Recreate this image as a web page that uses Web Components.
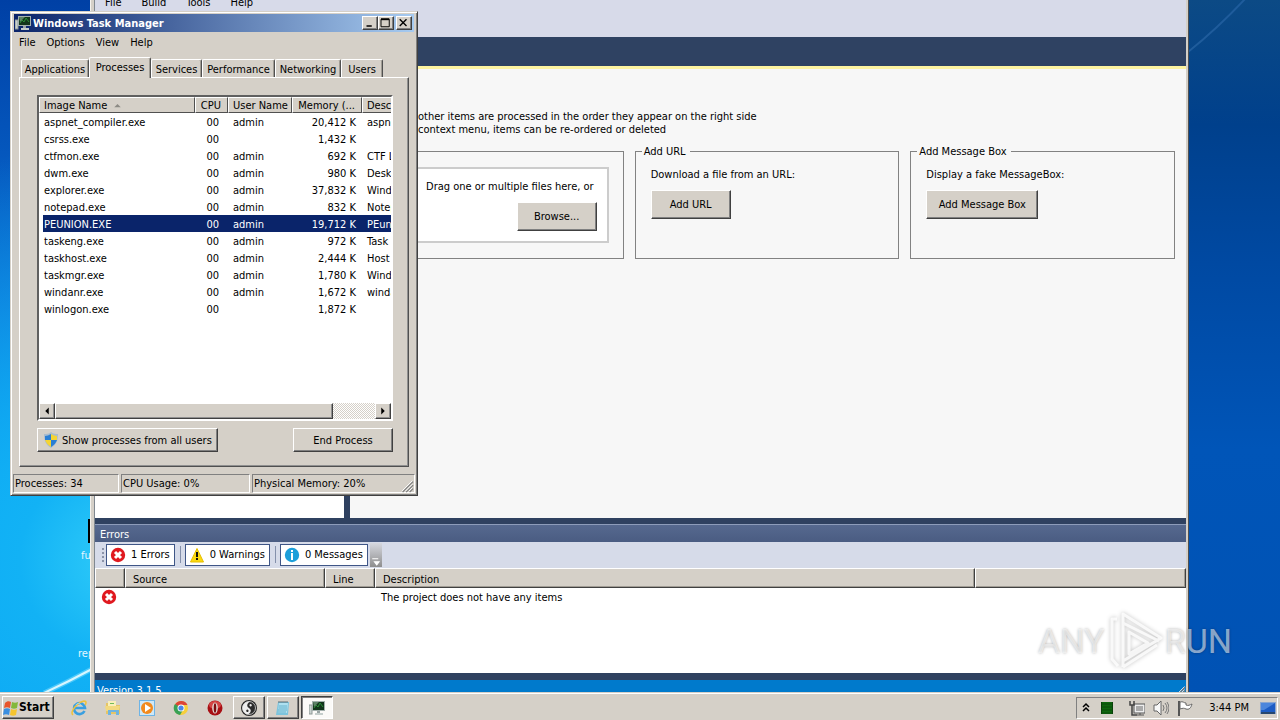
<!DOCTYPE html>
<html lang="en">
<head>
<meta charset="utf-8">
<title>Windows desktop</title>
<style>
html, body { margin: 0; height: 100%; }
body { font: 11px/13px "DejaVu Sans Condensed", "DejaVu Sans", sans-serif; color: #000; }
</style>
</head>
<body>
<desktop-shell>
  <peunion-window></peunion-window>
  <task-manager></task-manager>
</desktop-shell>
<script>
const RESET = `
*, *::before, *::after { box-sizing: border-box; }
:host { display: block; box-sizing: border-box; }
:host([hidden]) { display: none; }
button { font: inherit; color: inherit; margin: 0; padding: 0; border: 0; background: none; white-space: nowrap; }
a { color: inherit; text-decoration: none; }
table { border-collapse: separate; border-spacing: 0; table-layout: fixed; }
th { font-weight: normal; text-align: left; }
`;

function define(name, css, html) {
  const template = document.createElement('template');
  customElements.define(name, class extends HTMLElement {
    constructor() {
      super();
      template.innerHTML = `<style>${RESET}${css}</style>${typeof html === 'function' ? html(this) : html}`;
      this.attachShadow({ mode: 'open' }).append(template.content.cloneNode(true));
    }
  });
}

/* ---------- icons ---------- */
const ICONS = {
  monitor: `<rect x="0" y="5" width="3" height="9" fill="#c9d2cf" stroke="#8e9896"/><rect x="3" y="1" width="13" height="10" fill="#a3b0ad"/><rect x="4" y="2" width="11" height="8" fill="#12351b"/><path d="M5 8l2-3 2 2 2-4 3 4" fill="none" stroke="#2a8f36"/><path d="M4 2h6l-5 5z" fill="#5d8266"/><rect x="8" y="11" width="3" height="2" fill="#99a4a3"/><rect x="6" y="13" width="8" height="2" fill="#c5cecc"/>`,
  shield: `<path d="M8 0c2 2 5 2 7 2 0 7-2 11-7 14C3 13 1 9 1 2c2 0 5 0 7-2z" fill="#a9bccf"/><path d="M8 2C6 3 4 4 2 4v4h6z" fill="#2a7fd4"/><path d="M8 2c2 1 4 2 6 2v4H8z" fill="#f5d433"/><path d="M2 8h6v7C5 13 3 11 2 8z" fill="#f5d433"/><path d="M14 8H8v7c3-2 5-4 6-7z" fill="#2a7fd4"/>`,
  error: `<circle cx="8" cy="8" r="7.200" fill="#e0191f"/><path d="M5 5l6 6M11 5l-6 6" stroke="#fff" stroke-width="3"/>`,
  warning: `<path d="M8 1.500L14.500 15h-13z" fill="#fbd90f" stroke="#e5bd00" stroke-linejoin="round"/><path d="M8 5v5M8 11v2" stroke="#111" stroke-width="2"/>`,
  info: `<circle cx="8" cy="8" r="7.200" fill="#1d9fda"/><path d="M8 3v2M8 6v7" stroke="#fff" stroke-width="2"/>`,
  windows: `<path d="M2 3c2-2 4-2 6-1L7 8C5 7 3 7 1 8z" fill="#e8552b"/><path d="M9 2c2 1 4 1 6 0l-1 6c-2 1-4 1-6 0z" fill="#83b83a"/><path d="M1 9c2-1 4-1 6 0l-1 6c-2-1-4-1-6 0z" fill="#3c8fe0"/><path d="M8 9c2 1 4 1 6 0l-1 6c-2 1-4 1-6 0z" fill="#f6c52e"/>`,
  ie: `<path d="M13.500 11a5.500 5.500 0 1 1 .5-3H4" fill="none" stroke="#3a9fe0" stroke-width="2.600"/><path d="M2 15C-2 12 7 2 13 1c3 0 2 3 1 4" fill="none" stroke="#f0c23a" stroke-width="1.500"/><path d="M5 5c1-2 4-2 5 0" fill="none" stroke="#9bdcff"/>`,
  folder: `<path d="M1 3h5l1 2h8v9H1z" fill="#e6c566"/><path d="M3 1h8v6H3z" fill="#f9efb8"/><path d="M5 3h4v1H5z" fill="#71ba59"/><path d="M0 6h15l-1 5H1z" fill="#f2d97f"/><path d="M3 15v-5h11v5h-3v-3H6v3z" fill="#6fb4e0"/>`,
  player: `<rect x="0" y="0" width="16" height="16" fill="#6eb4e6"/><rect x="1" y="1" width="14" height="14" fill="#cfe8f7"/><circle cx="8" cy="8" r="6" fill="#f28a1e"/><path d="M6 4l6 4-6 4z" fill="#fff"/>`,
  chrome: `<circle cx="8" cy="8" r="7" fill="#f6cf3c"/><path d="M8 8L2 4.500A7 7 0 0 1 14.500 5H8z" fill="#dc4437"/><path d="M8 8L2 4a7 7 0 0 0 5 11l3-5z" fill="#38a156"/><circle cx="8" cy="8" r="3.500" fill="#fff"/><circle cx="8" cy="8" r="2.600" fill="#4a86e8"/>`,
  opera: `<circle cx="8" cy="8" r="7.500" fill="#a80f14"/><ellipse cx="8" cy="5" rx="6" ry="4" fill="#d44545"/><ellipse cx="8" cy="8" rx="2.800" ry="5.500" fill="#e2dcd6"/><ellipse cx="8" cy="8" rx="1.300" ry="4.800" fill="#7d0b0f"/>`,
  yinyang: `<circle cx="8" cy="8" r="8" fill="#262626"/><circle cx="8" cy="8" r="6.500" fill="#2c2c2c" stroke="#ddd" stroke-width=".8"/><g transform="rotate(30 8 8)"><path d="M8 1.500a6.500 6.500 0 0 0 0 13 3.250 3.250 0 0 0 0-6.500 3.250 3.250 0 0 1 0-6.500z" fill="#eee"/><circle cx="8" cy="4.750" r="1.200" fill="#eee"/><circle cx="8" cy="11.250" r="1.200" fill="#2c2c2c"/></g>`,
  notepad: `<path d="M3 2h11l-1 13H1z" fill="#7cc4dd"/><path d="M4 3h9l-1 10H3z" fill="#aee0f0"/><path d="M4 6h8M4 8h8M3 10h9M3 12h8" stroke="#67b2cc"/><path d="M4 1v2M6 1v2M8 1v2M10 1v2M12 1v2" stroke="#5d6c75"/>`,
  network: `<rect x="5" y="4" width="11" height="9" fill="#eee" stroke="#555"/><rect x="7" y="6" width="7" height="5" fill="#aaa"/><path d="M8 15h7M11 13v2" stroke="#555"/><path d="M1 1v4h4V1M3 5v10h5" fill="none" stroke="#444" stroke-width="1.500"/>`,
  speaker: `<path d="M1 5h3l4-4v14l-4-4H1z" fill="#f8f8f8" stroke="#666"/><path d="M10 5q2 3 0 6M12 3q4 5 0 10M14 2q4 6 0 12" fill="none" stroke="#777"/>`,
  flag: `<path d="M2 1v15" stroke="#555" stroke-width="2"/><path d="M3 2c3-1 4 1 6 1v2c2 1 4 0 6-1-1 4-3 6-6 5-2-1-3-1-6 0z" fill="#fff" stroke="#666"/>`,
  grid: `<rect x="2" y="2" width="12" height="12" fill="#0a3a0a"/><path d="M4 2v12M6 2v12M8 2v12M10 2v12M12 2v12" stroke="#129412"/><path d="M2 4h12M2 7h12M2 10h12M2 13h12" stroke="#0a4a0a"/>`,
  screen: `<rect x="0" y="2" width="16" height="12" fill="#8aa6d0"/><rect x="1" y="3" width="14" height="9" fill="#1c5cc4"/><path d="M1 3h14L4 10H1z" fill="#4c86dc"/><rect x="1" y="12" width="14" height="2" fill="#27476f"/>`,
  chevrons: `<path d="M5 7l3-3 3 3M5 11l3-3 3 3" fill="none" stroke="#000" stroke-width="1.500"/>`,
  minimize: `<path d="M4 12h7" stroke="#000" stroke-width="2"/>`,
  maximize: `<path d="M2 3h11v10H2z" fill="none" stroke="#000" stroke-width="1.300"/><path d="M2 3h11" stroke="#000" stroke-width="2.500"/>`,
  close: `<path d="M3 3l9 9M12 3l-9 9" stroke="#000" stroke-width="1.800"/>`,
  left: `<path d="M10 4v8L6 8z"/>`,
  right: `<path d="M6 4v8l4-4z"/>`,
  sort: `<path d="M4 10h8L8 6z" fill="#8c8a84"/>`,
  grip: `<path d="M3 15L15 3M7 15l8-8M11 15l4-4" stroke="#808080" stroke-width="1.500"/><path d="M2 14L14 2M6 14l8-8M10 14l4-4" stroke="#fff"/>`,
  more: `<path d="M3 5h8M6 9h6l-3 4z" stroke="#fff" stroke-width="1.500" fill="#fff"/>`
};
define('win-icon', `:host { width: 16px; height: 16px; flex: none; } svg { display: block; width: 100%; height: 100%; }`,
  el => `<svg viewBox="0 0 16 16" aria-hidden="true">${ICONS[el.getAttribute('name')] || ''}</svg>`);

/* ---------- raised push button ---------- */
define('win-button', `
:host { display: inline-block; min-width: 80px; height: 29px; }
button { width: 100%; height: 100%; padding: 0 5px; display: flex; align-items: center; justify-content: center; gap: 3px;
  background: #d5d0c8; border: 1px solid; border-color: #fff #404040 #404040 #fff; box-shadow: inset -1px -1px #808080; }
`, `<button type="button"><slot></slot></button>`);

/* ---------- group box ---------- */
define('group-box', `
fieldset { margin: 0; padding: 0 14px 0 15px; min-width: 0; height: 114px; border: 1px solid #828282; }
legend { min-height: 13px; padding: 0 4px 0 2px; margin-left: -9px; line-height: 13px; }
`, el => `<fieldset><legend>${el.getAttribute('label') || ''}</legend><slot></slot></fieldset>`);

/* ---------- builder window ---------- */
define('error-panel', `
:host { display: flex; flex-direction: column; background: #fff; }
h2 { margin: 0; height: 18px; padding: 3px 5px; font: inherit; color: #fff; background: linear-gradient(#56698f, #4a5c82); border-top: 1px solid #8d9cba; }
.bar { display: flex; align-items: center; gap: 5px; height: 26px; padding: 0 0 1px 7px; background: #d6dbe9; }
.dots { width: 2px; height: 14px; margin-right: -3px; background: repeating-linear-gradient(#8b93a8 0 2px, transparent 2px 4px); }
.bar button { display: flex; align-items: center; gap: 5px; height: 22px; padding: 0 4px 1px 3px; background: #fff; border: 1px solid #3f5687; }
.bar i { width: 1px; height: 17px; margin-right: -1px; background: #8490ab; }
.bar win-icon { margin-top: 1px; }
.bar .more { width: 12px; height: 24px; padding: 12px 0 0; margin-left: -3px; border: 0; background: linear-gradient(#d6d8df, #8e8e8e); }
.more win-icon { width: 12px; height: 12px; margin: 0; }
table { width: 100%; }
th { height: 20px; padding: 2px 7px 0; background: #d5d0c8; border: 1px solid; border-color: #fff #404040 #404040 #fff; box-shadow: inset -1px -1px #a09c94; }
td { height: 18px; padding: 0 6px; vertical-align: middle; white-space: nowrap; }
`, `
<h2>Errors</h2>
<div class="bar"><span class="dots"></span>
  <button type="button"><win-icon name="error"></win-icon>1 Errors</button><i></i>
  <button type="button"><win-icon name="warning"></win-icon>0 Warnings</button><i></i>
  <button type="button"><win-icon name="info"></win-icon>0 Messages</button>
  <button type="button" class="more" aria-label="More"><win-icon name="more"></win-icon></button>
</div>
<table>
  <colgroup><col style="width:30px"><col style="width:200px"><col style="width:50px"><col style="width:600px"><col></colgroup>
  <thead><tr><th></th><th>Source</th><th>Line</th><th>Description</th><th></th></tr></thead>
  <tbody><tr><td><win-icon name="error"></win-icon></td><td></td><td></td><td>The project does not have any items</td><td></td></tr></tbody>
</table>`);

define('peunion-window', `
:host { display: flex; flex-direction: column; padding: 0 2px 0 4px; background: #2f4160;
  border-left: 1px solid #f4f2ee; border-right: 1px solid #505050; box-shadow: inset 3px 0 #d5d0c8, inset 4px 0 #808890, inset -2px 0 #d5d0c8; }
nav { flex: none; display: flex; gap: 20px; height: 45px; padding: 4px 10px 0; background: #d7dae9; }
.tabs { flex: none; height: 29px; background: #2f4262; }
.work { flex: 1; min-height: 0; display: flex; gap: 6px; padding-bottom: 6px; }
.tree { width: 249px; background: #fff; margin-top: 1px; }
main { flex: 1; min-width: 0; padding: 41px 11px 0 9px; background: #f7f7f7; border-top: 3px solid #fdf3a0; }
p { margin: 0; white-space: nowrap; }
.intro { padding-left: 59px; height: 35px; }
.intro span { display: block; }
.groups { display: grid; grid-template-columns: repeat(3, minmax(0, 1fr)); gap: 11px; }
.drop { height: 76px; margin-top: 9px; padding: 11px 10px 0 0; background: #fff; border: 2px solid #ccc; text-align: right; }
.drop p { padding-right: 3px; margin-bottom: 9px; }
.act { padding-top: 10px; }
.act p { margin-bottom: 9px; }
error-panel { flex: none; height: 149px; }
footer { flex: none; display: flex; justify-content: space-between; margin-top: 7px; height: 23px; padding: 4px 2px; color: #fff; background: #007acc; }
footer win-icon { width: 12px; height: 12px; margin: 1px -2px 0 0; }
`, `
<nav><a href="#file">File</a><a href="#build">Build</a><a href="#tools">Tools</a><a href="#help">Help</a></nav>
<div class="tabs"></div>
<div class="work">
  <div class="tree"></div>
  <main>
    <p class="intro"><span>other items are processed in the order they appear on the right side</span><span>context menu, items can be re-ordered or deleted</span></p>
    <div class="groups">
      <group-box><div class="drop"><p>Drag one or multiple files here, or</p><win-button>Browse...</win-button></div></group-box>
      <group-box label="Add URL"><div class="act"><p>Download a file from an URL:</p><win-button>Add URL</win-button></div></group-box>
      <group-box label="Add Message Box"><div class="act"><p>Display a fake MessageBox:</p><win-button style="min-width:112px">Add Message Box</win-button></div></group-box>
    </div>
  </main>
</div>
<error-panel></error-panel>
<footer><span>Version 3.1.5</span><win-icon name="grip"></win-icon></footer>`);

/* ---------- task manager ---------- */
const PROCESSES = [
  ['aspnet_compiler.exe', 'admin', '20,412 K', 'aspnet_compiler.exe'],
  ['csrss.exe', '', '1,432 K', ''],
  ['ctfmon.exe', 'admin', '692 K', 'CTF Loader'],
  ['dwm.exe', 'admin', '980 K', 'Desktop'],
  ['explorer.exe', 'admin', '37,832 K', 'Windows'],
  ['notepad.exe', 'admin', '832 K', 'Notepad'],
  ['PEUNION.EXE', 'admin', '19,712 K', 'PEunion'],
  ['taskeng.exe', 'admin', '972 K', 'Task'],
  ['taskhost.exe', 'admin', '2,444 K', 'Host'],
  ['taskmgr.exe', 'admin', '1,780 K', 'Windows'],
  ['windanr.exe', 'admin', '1,672 K', 'windanr'],
  ['winlogon.exe', '', '1,872 K', '']
];
define('process-list', `
:host { display: flex; flex-direction: column; overflow: hidden; background: #fff; border: 2px solid; border-color: #606060 #fff #fff #606060; }
.view { flex: 1; min-height: 0; overflow: hidden; }
table { width: 423px; }
th { height: 16px; padding: 1px 4px 0; background: #d5d0c8; border: 1px solid; border-color: #fff #505050 #505050 #fff; white-space: nowrap; line-height: 13px; }
th span { display: inline-flex; align-items: center; gap: 4px; }
th win-icon { width: 13px; height: 13px; }
th.n { padding-right: 6px; }
td { height: 17px; padding: 2px 5px 0; white-space: nowrap; line-height: 15px; }
.n { text-align: right; }
td.n { padding-right: 9px; }
td.m { padding-right: 6px; }
tr[aria-selected] td { color: #fff; background: #0a246a; }
tr[aria-selected] td:first-child { background: linear-gradient(90deg, #fff 4px, #0a246a 4px); }
.scroll { flex: none; display: flex; height: 16px; background: repeating-conic-gradient(#fff 0 25%, #d5d0c8 0 50%) 0 0 / 2px 2px; }
.scroll button { width: 16px; background: #d5d0c8; border: 1px solid; border-color: #fff #404040 #404040 #fff; box-shadow: inset -1px -1px #909090; }
.scroll win-icon { width: 14px; height: 14px; }
.thumb { width: 278px; background: #d5d0c8; border: 1px solid; border-color: #fff #404040 #404040 #fff; box-shadow: inset -1px -1px #909090; }
.gap { flex: 1; }
`, `
<div class="view"><table>
  <colgroup><col style="width:156px"><col style="width:33px"><col style="width:64px"><col style="width:70px"><col></colgroup>
  <thead><tr><th><span>Image Name<win-icon name="sort"></win-icon></span></th><th class="n">CPU</th><th>User Name</th><th class="n">Memory (...</th><th>Description</th></tr></thead>
  <tbody>${PROCESSES.map(([name, user, mem, desc]) => `<tr${name === 'PEUNION.EXE' ? ' aria-selected="true"' : ''}><td>${name}</td><td class="n">00</td><td>${user}</td><td class="n m">${mem}</td><td>${desc}</td></tr>`).join('')}</tbody>
</table></div>
<div class="scroll"><button type="button" aria-label="Scroll left"><win-icon name="left"></win-icon></button><div class="thumb"></div><div class="gap"></div><button type="button" aria-label="Scroll right"><win-icon name="right"></win-icon></button></div>`);

define('task-manager', `
:host { display: flex; flex-direction: column; padding: 2px; background: #d5d0c8; border: 1px solid; border-color: #d5d0c8 #404040 #404040 #d5d0c8;
  box-shadow: inset 1px 1px #fff, inset -1px -1px #808080; }
header { flex: none; display: flex; align-items: center; height: 18px; margin: 0 1px; padding: 0 2px 0 1px; color: #fff; background: linear-gradient(90deg, #0a246a, #a6caf0); }
h1 { flex: 1; margin: 0 0 0 2px; font: inherit; font-weight: bold; white-space: nowrap; }
header button { width: 16px; height: 14px; background: #d5d0c8; border: 1px solid; border-color: #fff #404040 #404040 #fff; box-shadow: inset -1px -1px #808080; }
header button:last-child { margin-left: 2px; }
header button win-icon { width: 13px; height: 12px; }
nav { flex: none; display: flex; gap: 11px; height: 24px; padding: 4px 6px; }
.tabs { flex: none; display: flex; align-items: flex-end; height: 21px; padding-left: 8px; }
.tabs button { height: 18px; padding-top: 1px; border: 1px solid; border-color: #fff #505050 transparent #fff; border-bottom: 0; border-radius: 2px 2px 0 0; box-shadow: inset -1px 0 #a09c94; }
.tabs button[aria-selected] { position: relative; height: 21px; margin-bottom: -1px; padding: 0 0 1px; background: #d5d0c8; }
section { flex: 1; min-height: 0; display: flex; flex-direction: column; gap: 7px; margin: 0 6px; padding: 17px 15px 14px 17px; border: 1px solid; border-color: #fff #505050 #505050 #fff; box-shadow: inset -1px -1px #909090; }
process-list { flex: 1; min-height: 0; }
.row { display: flex; justify-content: space-between; }
.row win-button { height: 24px; min-width: 100px; }
footer { flex: none; display: flex; gap: 2px; height: 19px; margin-top: 7px; }
footer span { height: 19px; padding: 2px 1px; border: 1px solid; border-color: #808080 #fff #fff #808080; white-space: nowrap; }
footer span:last-child { flex: 1; display: flex; justify-content: space-between; padding-right: 0; }
footer win-icon { width: 14px; height: 14px; margin-top: 2px; }
`, `
<header><win-icon name="monitor"></win-icon><h1>Windows Task Manager</h1>
  <button type="button" aria-label="Minimize"><win-icon name="minimize"></win-icon></button><button type="button" aria-label="Maximize"><win-icon name="maximize"></win-icon></button><button type="button" aria-label="Close"><win-icon name="close"></win-icon></button></header>
<nav><a href="#file">File</a><a href="#options">Options</a><a href="#view">View</a><a href="#help">Help</a></nav>
<div class="tabs" role="tablist">
  <button type="button" role="tab" style="width:68px">Applications</button><button type="button" role="tab" aria-selected="true" style="width:62px">Processes</button><button type="button" role="tab" style="width:51px">Services</button><button type="button" role="tab" style="width:73px">Performance</button><button type="button" role="tab" style="width:66px">Networking</button><button type="button" role="tab" style="width:42px">Users</button>
</div>
<section>
  <process-list></process-list>
  <div class="row"><win-button><win-icon name="shield"></win-icon>Show processes from all users</win-button><win-button>End Process</win-button></div>
</section>
<footer><span style="width:106px">Processes: 34</span><span style="width:129px">CPU Usage: 0%</span><span>Physical Memory: 20%<win-icon name="grip"></win-icon></span></footer>`);

/* ---------- taskbar ---------- */
define('task-bar', `
:host { display: flex; align-items: center; height: 28px; padding: 3px 2px 1px; background: #d5d0c8; border-top: 1px solid #d5d0c8; box-shadow: inset 0 1px #fff; }
.start, .app { display: flex; align-items: center; height: 23px; border: 1px solid; border-color: #fff #404040 #404040 #fff; box-shadow: inset -1px -1px #808080; }
.start { width: 52px; font-size: 12px; font-weight: bold; }
.quick { display: flex; gap: 18px; margin: 0 10px 0 17px; }
.quick button { display: block; }
.apps { display: flex; gap: 2px; }
.app { width: 32px; justify-content: center; }
.app[aria-pressed] { background: #fbfaf8; border-color: #404040 #fff #fff #404040; box-shadow: inset 1px 1px #808080; }
.tray { display: flex; align-items: center; height: 22px; margin-left: auto; padding: 0 1px; border: 1px solid; border-color: #808080 #fff #fff #808080; gap: 8px; }
.tray :nth-child(2) { margin: 0 6px 0 -3px; }
time { margin: 0 3px 0 8px; }
`, `
<button type="button" class="start"><win-icon name="windows"></win-icon>Start</button>
<div class="quick">${['ie', 'folder', 'player', 'chrome', 'opera'].map(n => `<button type="button" aria-label="${n}"><win-icon name="${n}"></win-icon></button>`).join('')}</div>
<div class="apps"><button type="button" class="app" aria-label="PEunion"><win-icon name="yinyang"></win-icon></button><button type="button" class="app" aria-label="Notepad"><win-icon name="notepad"></win-icon></button><button type="button" class="app" aria-pressed="true" aria-label="Task Manager"><win-icon name="monitor"></win-icon></button></div>
<div class="tray"><win-icon name="chevrons"></win-icon><win-icon name="grid"></win-icon><win-icon name="network"></win-icon><win-icon name="speaker"></win-icon><win-icon name="flag"></win-icon><time>3:44 PM</time><win-icon name="screen"></win-icon></div>`);

/* ---------- translucent brand mark ---------- */
define('brand-mark', `
:host { display: flex; align-items: center; justify-content: space-between; width: 194px; height: 64px; color: rgba(255,255,255,.55);
  font: 34px/40px "Liberation Sans Narrow", Roboto, sans-serif; text-shadow: 0 0 3px rgba(0,0,0,.3); pointer-events: none; }
svg { width: 60px; height: 64px; flex: none; filter: drop-shadow(0 0 2px rgba(0,0,0,.3)); }
`, `<span>ANY</span><svg viewBox="0 0 60 64" aria-hidden="true"><path d="M18 58V5l38 24-38 23M18 14l36 18M18 58l34-22M12 10H7v40l6 7M24 23v22l19-11z" fill="none" stroke="#fff" stroke-opacity=".8" stroke-width="3" stroke-linejoin="round"/></svg><span>RUN</span>`);

/* ---------- desktop ---------- */
define('desktop-shell', `
:host { display: flex; flex-direction: column; height: 100vh; min-height: 540px; }
.desk { position: relative; flex: 1; overflow: hidden; background:
  radial-gradient(circle at 120px 560px, #30ccf9 0, #12b2f5 100px, transparent 420px),
  linear-gradient(90deg, transparent 90%, rgba(0,65,155,.9) 93%),
  linear-gradient(#0040a5, #0a6fd6 45%, #04a0f5 75%, #069bf2); }
.right { position: absolute; right: 0; top: 0; width: 92px; height: 100%; background: linear-gradient(#0c4a85, #00408c 18%, #0049a2 38%, #0055b8 65%, #0052b4); }
.streak { position: absolute; }
.left { left: 0; bottom: 0; width: 92px; height: 30px; }
.top { right: 0; top: 0; width: 92px; height: 60px; }
.label { position: absolute; color: #e4f6ff; }
.glyph { position: absolute; left: 88px; width: 3px; height: 24px; background: #000; }
::slotted(peunion-window) { position: absolute; inset: -8px 91px -11px 90px; }
::slotted(task-manager) { position: absolute; left: 10px; top: 11px; width: 408px; height: 485px; }
brand-mark { position: absolute; right: 48px; bottom: 19px; }
`, `
<div class="desk">
  <div class="right"></div>
  <svg class="streak left" viewBox="0 0 92 30" aria-hidden="true"><path d="M44 31Q68 20 92 7" fill="none" stroke="#7fe0ff" stroke-width="5" opacity=".5"/><path d="M44 31Q68 20 92 7" fill="none" stroke="#d8f6ff" stroke-width="2"/></svg>
  <svg class="streak top" viewBox="0 0 92 60" aria-hidden="true"><path d="M0 52Q30 28 58-2" fill="none" stroke="#1f5c9c" stroke-width="2"/></svg>
  <span class="glyph" style="top:519px"></span>
  <span class="label" style="left:81px;top:549px">fu</span>
  <span class="label" style="left:78px;top:647px">rep</span>
  <slot></slot>
  <brand-mark></brand-mark>
</div>
<task-bar></task-bar>`);
</script>
</body>
</html>
